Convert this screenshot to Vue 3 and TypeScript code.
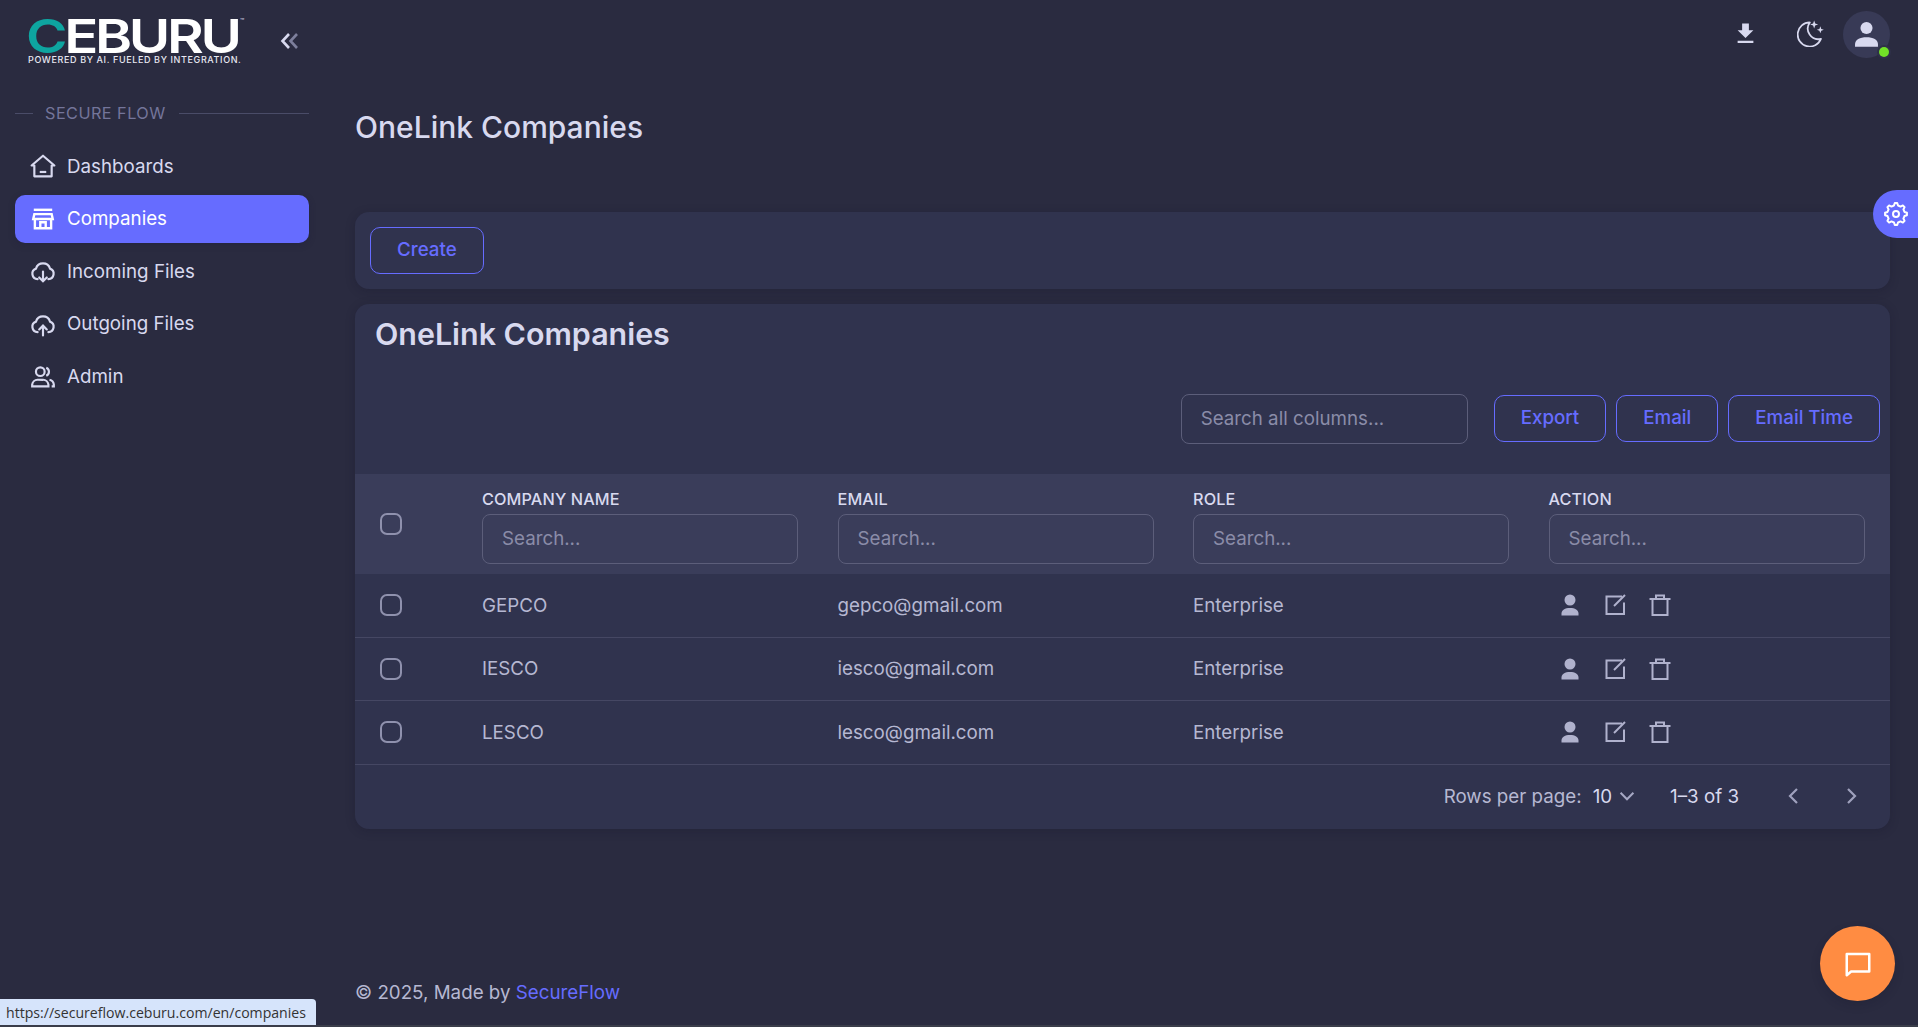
<script setup lang="ts">
const nav = [
  { label: 'Dashboards', icon: 'home', active: false },
  { label: 'Companies', icon: 'store', active: true },
  { label: 'Incoming Files', icon: 'down', active: false },
  { label: 'Outgoing Files', icon: 'up', active: false },
  { label: 'Admin', icon: 'group', active: false },
]
const columns = ['Company Name', 'Email', 'Role', 'Action']
const rows = [
  { name: 'GEPCO', email: 'gepco@gmail.com', role: 'Enterprise' },
  { name: 'IESCO', email: 'iesco@gmail.com', role: 'Enterprise' },
  { name: 'LESCO', email: 'lesco@gmail.com', role: 'Enterprise' },
]
// Eight-toothed cog outline for the settings tab
const teeth = 8
const cog = Array.from({ length: teeth * 4 }, (_, i) => {
  const step = (Math.PI * 2) / teeth
  const tooth = Math.floor(i / 4)
  const offsets = [-0.3, -0.14, 0.14, 0.3]
  const radii = [8.7, 11, 11, 8.7]
  const a = (tooth + offsets[i % 4]) * step - Math.PI / 2
  const r = radii[i % 4]
  return `${(12 + r * Math.cos(a)).toFixed(2)} ${(12 + r * Math.sin(a)).toFixed(2)}`
})
const cogPath = `M${cog.join('L')}z`
</script>

<template>
  <div class="layout">
    <aside class="sidebar">
      <div class="brand">
        <div class="logo">
          <div class="wordmark"><span class="teal">C</span>EBURU</div>
          <span class="tm">™</span>
          <div class="tagline">POWERED BY AI. FUELED BY INTEGRATION.</div>
        </div>
        <svg class="collapse" viewBox="0 0 20 20" fill="none" stroke-width="2.6">
          <path d="M9 3 2.500 10 9 17" stroke="#d8d9ef" />
          <path d="M17 3 10.500 10 17 17" stroke="#7d7f9c" />
        </svg>
      </div>
      <div class="section"><span class="dash"></span><span class="section-label">SECURE FLOW</span><span class="rule"></span></div>
      <nav class="menu">
        <a v-for="item in nav" :key="item.label" class="menu-item" :class="{ active: item.active }">
          <svg class="menu-icon" viewBox="0 0 24 24" fill="none" stroke="currentColor" stroke-width="2">
            <template v-if="item.icon === 'home'">
              <path d="M1.500 11.500 12 2.500l10.500 9H20v10H4v-10z" stroke-linejoin="round" /><path d="M9 17.500h6" />
            </template>
            <template v-else-if="item.icon === 'store'">
              <path d="M3.500 3.500h17" stroke-width="2.200" /><path d="M4 7.500h16l1 4.500H3zM4.500 12v8.500h15V12M9.500 20.500V15h5v5.500" stroke-width="2.200" />
            </template>
            <template v-else-if="item.icon === 'down'">
              <path d="M7 19.500a5 5 0 0 1-1.500-9.700 6.800 6.800 0 0 1 13 0A5 5 0 0 1 17 19.500" stroke-linecap="round" /><path d="M12 12.500v9M8.500 18l3.500 3.500 3.500-3.500" stroke-linecap="round" />
            </template>
            <template v-else-if="item.icon === 'up'">
              <path d="M7 19.500a5 5 0 0 1-1.500-9.700 6.800 6.800 0 0 1 13 0A5 5 0 0 1 17 19.500" stroke-linecap="round" /><path d="M12 22.500v-9M8.500 17l3.500-3.500 3.500 3.500" stroke-linecap="round" />
            </template>
            <template v-else>
              <circle cx="9.500" cy="8" r="4" /><path d="M2 21.500v-1.500a5 5 0 0 1 5-4.500h5a5 5 0 0 1 5 4.500v1.500zM15 4.300a4 4 0 0 1 0 7.400M18 15.500a5 5 0 0 1 4 4.500v1.500h-2" />
            </template>
          </svg>
          <span>{{ item.label }}</span>
        </a>
      </nav>
    </aside>

    <div class="content">
      <header class="topbar">
        <svg class="top-icon dl" viewBox="0 0 24 24" fill="#d8d9ef"><path d="M5 20.500h14v-2H5zM19 9h-4V3H9v6H5l7 7z" /></svg>
        <svg class="top-icon moon" viewBox="0 0 24 24" fill="none" stroke="#d8d9ef" stroke-width="1.500">
          <path d="M11 3A10.300 10.300 0 1 0 20.500 17 9 9 0 0 1 11 3z" stroke-linejoin="round" />
          <path d="M14.700 1.300l.9 2.500 2.500.9-2.500.9-.9 2.500-.9-2.500-2.500-.9 2.500-.9zM20 6.300l.8 2.200 2.200.8-2.200.8-.8 2.200-.8-2.200-2.200-.8 2.200-.8z" fill="#d8d9ef" stroke="none" />
        </svg>
        <div class="avatar">
          <svg viewBox="0 0 24 24" fill="#d8d9ef"><circle cx="12" cy="7.500" r="5" /><path d="M2.500 23v-2c0-4 4-6 9.500-6s9.500 2 9.500 6v2z" /></svg>
          <span class="online"></span>
        </div>
      </header>

      <main class="main">
        <h1 class="page-title">OneLink Companies</h1>
        <section class="card actions">
          <button class="btn create">Create</button>
        </section>
        <section class="card table-card">
          <h2 class="card-title">OneLink Companies</h2>
          <div class="toolbar">
            <input class="field global" placeholder="Search all columns..." />
            <button class="btn">Export</button>
            <button class="btn">Email</button>
            <button class="btn">Email Time</button>
          </div>
          <div class="grid head">
            <div class="check-cell"><span class="check"></span></div>
            <div v-for="c in columns" :key="c" class="col-head">
              <div class="col-label">{{ c }}</div>
              <input class="field col-search" placeholder="Search..." />
            </div>
          </div>
          <div v-for="r in rows" :key="r.name" class="grid row">
            <div class="check-cell"><span class="check"></span></div>
            <div>{{ r.name }}</div>
            <div>{{ r.email }}</div>
            <div>{{ r.role }}</div>
            <div class="row-actions">
              <svg viewBox="0 0 24 24" fill="#b0b2cd"><circle cx="12" cy="7" r="5.500" /><path d="M3.500 22.500v-2c0-3.500 3.500-5.500 8.500-5.500s8.500 2 8.500 5.500v2z" /></svg>
              <svg viewBox="0 0 24 24" fill="none" stroke="#b0b2cd" stroke-width="2"><path d="M19 3.500H3.500v17.500h17.500V9.500" /><path d="M11 13 22 2" /></svg>
              <svg viewBox="0 0 24 24" fill="none" stroke="#b0b2cd" stroke-width="2"><path d="M1.500 6h21M4.500 6v16h15V6M8 6V2.500h8V6" /></svg>
            </div>
          </div>
          <div class="pager">
            <span class="rpp">Rows per page:</span>
            <span class="rpp-value">10</span>
            <svg class="chev" viewBox="0 0 24 24" fill="none" stroke="#a6a8c4" stroke-width="2.200"><path d="M5 8.500l7 7 7-7" /></svg>
            <span class="range">1–3 of 3</span>
            <svg class="nav-arrow prev" viewBox="0 0 24 24" fill="none" stroke="#9fa1bd" stroke-width="2.200"><path d="M15 5l-7 7 7 7" /></svg>
            <svg class="nav-arrow next" viewBox="0 0 24 24" fill="none" stroke="#9fa1bd" stroke-width="2.200"><path d="M9 5l7 7-7 7" /></svg>
          </div>
        </section>
      </main>

      <footer class="footer">© 2025, Made by <a class="link">SecureFlow</a></footer>
    </div>

    <div class="settings-tab">
      <svg viewBox="0 0 24 24" fill="none" stroke="#fff" stroke-width="2" stroke-linejoin="round">
        <path :d="cogPath" />
        <circle cx="12" cy="12" r="3" />
      </svg>
    </div>
    <div class="fab">
      <svg viewBox="0 0 24 24" fill="none" stroke="#fff" stroke-width="2"><path d="M3 4h18v14H6.500L3 21z" stroke-linejoin="round" /></svg>
    </div>
    <div class="status">https://secureflow.ceburu.com/en/companies</div>
  </div>
</template>

<style>
html, body { margin: 0; background: #2a2b40; }
</style>

<style scoped>
.layout {
  display: flex;
  width: 1918px;
  height: 1027px;
  overflow: hidden;
  background: #2a2b40;
  color: #d8d9ef;
  font-family: Inter, "Liberation Sans", sans-serif;
  box-sizing: border-box;
  border-bottom: 2px solid #3a3d4a;
}
.sidebar { width: 324px; flex: none; padding: 0 15px; box-sizing: border-box; }
.brand { display: flex; align-items: flex-start; height: 92px; padding: 15px 0 0 13px; box-sizing: border-box; }
.logo { width: 225px; flex: none; position: relative; }
.wordmark {
  font-size: 47px;
  line-height: 40px;
  height: 40px;
  margin-left: -2px;
  font-weight: 600;
  color: #fff;
  white-space: nowrap;
  transform: translateY(1px) scaleX(1.2);
  transform-origin: left center;
  letter-spacing: -2.800px;
}
.teal { color: #0ea5a0; }
.tm { position: absolute; left: 212px; top: 3px; font-size: 7px; line-height: 8px; color: #d8d9ef; }
.tagline { font-size: 9px; line-height: 10px; color: #e8e8f2; letter-spacing: .62px; white-space: nowrap; font-weight: 500; }
.collapse { width: 20px; height: 20px; margin: 16px 0 0 27px; flex: none; }
.section { display: flex; align-items: center; height: 42px; color: #74759a; font-size: 16.250px; }
.dash { width: 18px; height: 1px; background: #4a4c68; }
.section-label { margin: 0 13px 0 12px; letter-spacing: .45px; }
.rule { flex: 1; height: 1px; background: #4a4c68; }
.menu { display: flex; flex-direction: column; gap: 4.600px; margin-top: 8px; }
.menu-item {
  display: flex;
  align-items: center;
  gap: 11px;
  height: 48px;
  padding-left: 15px;
  border-radius: 10px;
  font-size: 18.750px;
  color: #d8d9ef;
}
.menu-item.active { background: #666cff; color: #fff; box-shadow: 0 2px 6px rgba(30, 30, 60, .35); }
.menu-icon { width: 26px; height: 26px; flex: none; }

.content { flex: 1; display: flex; flex-direction: column; min-width: 0; padding: 0 28px 0 31px; }
.topbar { display: flex; align-items: center; justify-content: flex-end; height: 68px; flex: none; position: relative; }
.top-icon { flex: none; }
.dl { width: 27px; height: 27px; margin-right: 38px; margin-top: -2px; }
.moon { width: 28px; height: 28px; margin-right: 18px; margin-top: -3px; }
.avatar {
  position: relative;
  width: 47px;
  height: 47px;
  border-radius: 50%;
  background: #383a56;
  display: flex;
  align-items: center;
  justify-content: center;
}
.avatar svg { width: 29px; height: 29px; margin-top: -2px; }
.online {
  position: absolute;
  right: 1px;
  bottom: 1px;
  width: 10px;
  height: 10px;
  border-radius: 50%;
  background: #72e128;
  box-shadow: 0 0 0 2px #2f3049;
}
.main { display: flex; flex-direction: column; }
.page-title { margin: 40px 0 0; font-size: 30px; line-height: 38px; font-weight: 500; color: #d8d9ef; height: 104px; }
.card { background: #30334e; border-radius: 14px; box-shadow: 0 2px 10px rgba(20, 20, 40, .25); }
.actions { height: 77px; padding: 15px; box-sizing: border-box; margin-bottom: 15px; }
.btn {
  height: 47px;
  padding: 0 26px 2px;
  border: 1px solid #666cff;
  border-radius: 10px;
  background: transparent;
  color: #666cff;
  font: 500 18.750px Inter, "Liberation Sans", sans-serif;
  box-sizing: border-box;
}
.table-card { height: 525px; }
.card-title { margin: 0; padding: 12px 20px 0; font-size: 30.400px; line-height: 36px; font-weight: 600; color: #d8d9ef; height: 50px; box-sizing: content-box; }
.toolbar { display: flex; align-items: center; justify-content: flex-end; gap: 10px; padding-right: 10px; height: 53px; margin-top: 26px; }
.field {
  background: transparent;
  border: 1px solid #5c5e7a;
  border-radius: 8px;
  box-sizing: border-box;
  padding: 0 19px;
  color: #d8d9ef;
  font: 400 18.750px Inter, "Liberation Sans", sans-serif;
  outline: none;
}
.field::placeholder { color: #8a8ca8; opacity: 1; }
.global { width: 287px; height: 50px; margin-right: 16px; }
.grid { display: grid; grid-template-columns: 127px 355.500px 355.500px 355.500px 1fr; align-items: center; }
.head { height: 100px; margin-top: 29px; background: #3a3d5a; }
.check-cell { padding-left: 25px; display: flex; align-items: center; }
.check { width: 18px; height: 18px; border: 2.500px solid #8f91ad; border-radius: 7px; display: block; }
.col-head { padding-top: 4px; }
.col-label { font-size: 16.250px; line-height: 20px; font-weight: 500; text-transform: uppercase; color: #d8d9ef; margin-bottom: 5px; letter-spacing: .12px; }
.col-search { width: 316px; height: 50px; display: block; }
.row { height: 63.500px; border-bottom: 1px solid #454763; box-sizing: border-box; font-size: 18.750px; color: #b6b8d2; }
.row-actions { display: flex; align-items: center; gap: 21px; padding-left: 9.500px; }
.row-actions svg { width: 24px; height: 24px; flex: none; }
.pager { display: flex; align-items: center; justify-content: flex-end; height: 63px; padding-right: 27px; font-size: 18.750px; color: #b6b8d2; }
.rpp-value { margin-left: 11px; color: #d8d9ef; }
.chev { width: 22px; height: 22px; margin-left: 4px; }
.range { margin-left: 32px; color: #d8d9ef; }
.nav-arrow { width: 24px; height: 24px; flex: none; }
.prev { margin-left: 43px; }
.next { margin-left: 33px; }
.footer { margin-top: 152px; font-size: 18.750px; color: #b6b8d2; line-height: 24px; }
.link { color: #666cff; }

.settings-tab {
  position: fixed;
  right: 0;
  top: 190px;
  width: 45px;
  height: 48px;
  background: #666cff;
  border-radius: 24px 0 0 24px;
  display: flex;
  align-items: center;
  padding-left: 11px;
  box-sizing: border-box;
}
.settings-tab svg { width: 24px; height: 24px; }
.fab {
  position: fixed;
  left: 1820px;
  top: 926px;
  width: 75px;
  height: 75px;
  border-radius: 50%;
  background: #ff8c42;
  display: flex;
  align-items: center;
  justify-content: center;
  box-shadow: 0 4px 10px rgba(20, 20, 40, .2);
}
.fab svg { width: 30px; height: 30px; }
.status {
  position: fixed;
  left: 0;
  top: 999px;
  width: 316px;
  height: 26px;
  background: #d6e4fb;
  border-top-right-radius: 4px;
  color: #333;
  font: 14.100px/27px "Open Sans", "Liberation Sans", sans-serif;
  padding-left: 6px;
  box-sizing: border-box;
  white-space: nowrap;
  overflow: hidden;
}
</style>
